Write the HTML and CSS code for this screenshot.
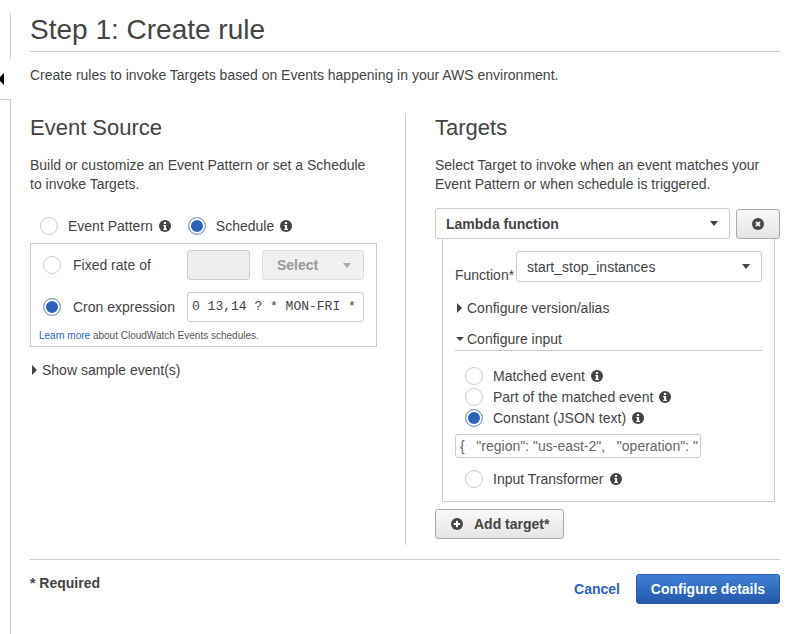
FILE: index.html
```html
<!DOCTYPE html>
<html lang="en">
<head>
    <meta charset="UTF-8">
    <title>Step 1: Create rule</title>
    <link rel="stylesheet" href="styles.css">
</head>
<body>
<svg class="icon-defs" width="0" height="0">
    <symbol id="info" viewBox="0 0 12 12">
        <circle cx="6" cy="6" r="6" fill="#444"/>
        <rect x="4.9" y="2" width="2.2" height="2" fill="#fff"/>
        <path d="M4.2 5h2.9v3.8h.9V10H4.2V8.8h.9V6.2h-.9z" fill="#fff"/>
    </symbol>
</svg>
<div class="page">
    <aside class="rail">
        <div class="rail-top"></div>
        <div class="rail-toggle"><span class="rail-arrow"></span></div>
        <div class="rail-bottom"></div>
    </aside>
    <main class="content">
        <h1 class="title">Step 1: Create rule</h1>
        <p class="intro">Create rules to invoke Targets based on Events happening in your AWS environment.</p>

        <div class="columns">
            <section class="col col-left">
                <h2>Event Source</h2>
                <p class="lead">Build or customize an Event Pattern or set a Schedule<br>to invoke Targets.</p>

                <div class="source-choice">
                    <span class="radio"></span>
                    <span class="choice-label">Event Pattern</span>
                    <svg class="info"><use href="#info"/></svg>
                    <span class="radio checked second"></span>
                    <span class="choice-label">Schedule</span>
                    <svg class="info"><use href="#info"/></svg>
                </div>

                <div class="schedule-box">
                    <div class="schedule-row">
                        <span class="radio"></span>
                        <span class="schedule-label">Fixed rate of</span>
                        <span class="rate-input"></span>
                        <span class="rate-select">Select<span class="caret-down light"></span></span>
                    </div>
                    <div class="schedule-row cron-row">
                        <span class="radio checked"></span>
                        <span class="schedule-label">Cron expression</span>
                        <span class="cron-input">0 13,14 ? * MON-FRI *</span>
                    </div>
                    <p class="schedule-help"><a href="#">Learn more</a> about CloudWatch Events schedules.</p>
                </div>

                <div class="expander sample"><span class="caret-right"></span>Show sample event(s)</div>
            </section>

            <section class="col col-right">
                <h2>Targets</h2>
                <p class="lead">Select Target to invoke when an event matches your<br>Event Pattern or when schedule is triggered.</p>

                <div class="target-head">
                    <div class="select target-select"><b>Lambda function</b><span class="caret-down"></span></div>
                    <button class="btn remove-btn" type="button">
                        <svg width="12" height="12" viewBox="0 0 12 12"><circle cx="6" cy="6" r="6" fill="#444"/><path d="M3.9 3.9l4.2 4.2M8.1 3.9L3.9 8.1" stroke="#fff" stroke-width="1.8"/></svg>
                    </button>
                </div>

                <div class="target-panel">
                    <div class="function-row">
                        <span class="function-label">Function*</span>
                        <div class="select function-select">start_stop_instances<span class="caret-down"></span></div>
                    </div>
                    <div class="expander version"><span class="caret-right"></span>Configure version/alias</div>
                    <div class="expander input-head"><span class="caret-open"></span>Configure input</div>

                    <div class="input-option first">
                        <span class="radio"></span><span>Matched event</span>
                        <svg class="info"><use href="#info"/></svg>
                    </div>
                    <div class="input-option">
                        <span class="radio"></span><span>Part of the matched event</span>
                        <svg class="info"><use href="#info"/></svg>
                    </div>
                    <div class="input-option">
                        <span class="radio checked"></span><span>Constant (JSON text)</span>
                        <svg class="info"><use href="#info"/></svg>
                    </div>
                    <div class="json-input">{ &nbsp; "region": "us-east-2", &nbsp; "operation": "</div>
                    <div class="input-option last">
                        <span class="radio"></span><span>Input Transformer</span>
                        <svg class="info"><use href="#info"/></svg>
                    </div>
                </div>

                <button class="btn add-btn" type="button">
                    <svg width="12" height="12" viewBox="0 0 12 12"><circle cx="6" cy="6" r="6" fill="#444"/><path d="M6 2.8v6.4M2.8 6h6.4" stroke="#fff" stroke-width="1.9"/></svg>
                    Add target*
                </button>
            </section>
        </div>

        <footer class="footer">
            <span class="required">* Required</span>
            <div class="actions">
                <a class="cancel" href="#">Cancel</a>
                <button class="btn-primary" type="button">Configure details</button>
            </div>
        </footer>
    </main>
</div>
</body>
</html>
```

FILE: styles.css
```css
html, body {
    margin: 0;
    padding: 0;
    height: 100%;
    overflow: hidden;
}

body {
    font-family: "Liberation Sans", Arial, sans-serif;
    font-size: 14px;
    color: #444;
    background-color: #fff;
}

.icon-defs {
    display: block;
    height: 0;
}

.page {
    display: flex;
    width: 803px;
    height: 634px;
}

/* left rail */
.rail {
    width: 11px;
    display: flex;
    flex-direction: column;
    flex-shrink: 0;
}

.rail-top {
    height: 46px;
    margin-top: 13px;
    border-right: 1px solid #ccc;
}

.rail-toggle {
    height: 40px;
    display: flex;
    align-items: center;
}

.rail-arrow {
    width: 0;
    height: 0;
    margin-left: -2px;
    border-top: 6px solid transparent;
    border-bottom: 6px solid transparent;
    border-right: 6px solid #000;
}

.rail-bottom {
    flex: 1;
    border-top: 1px solid #ccc;
    border-right: 1px solid #ccc;
}

/* main */
.content {
    width: 750px;
    margin-left: 19px;
}

.title {
    margin: 0;
    padding: 13px 0 0;
    height: 38px;
    font-size: 28px;
    line-height: 33px;
    font-weight: 400;
    border-bottom: 1px solid #ccc;
}

.intro {
    margin: 15px 0 0;
    line-height: 16px;
}

.columns {
    display: grid;
    grid-template-columns: 375px 375px;
    margin-top: 30px;
}

.col {
    min-height: 431px;
}

.col-left {
    padding-top: 1px;
}

.col-right {
    border-left: 1px solid #ccc;
    padding-top: 1px;
    padding-left: 29px;
    padding-right: 0;
}

h2 {
    margin: 0;
    font-size: 22px;
    line-height: 28px;
    font-weight: 400;
}

.lead {
    margin: 14px 0 0;
    line-height: 19px;
}

/* radios */
.radio {
    width: 18px;
    height: 18px;
    box-sizing: border-box;
    border: 1px solid #ccc;
    border-radius: 50%;
    background-color: #fff;
    flex-shrink: 0;
    display: inline-block;
}

.radio.checked {
    border-color: #8d9dc4;
    background-color: #2a62bd;
    box-shadow: inset 0 0 0 2px #fff;
}

.info {
    width: 12px;
    height: 12px;
    flex-shrink: 0;
}

/* event source */
.source-choice {
    display: flex;
    align-items: center;
    margin: 23px 0 0 10px;
    height: 18px;
}

.choice-label {
    margin: 0 6px 0 10px;
}

.radio.second {
    margin-left: 17px;
}

.schedule-box {
    width: 347px;
    height: 104px;
    box-sizing: border-box;
    margin-top: 8px;
    border: 1px solid #ccc;
    padding: 6px 12px 0;
}

.schedule-row {
    display: flex;
    align-items: center;
    height: 30px;
}

.cron-row {
    margin-top: 12px;
}

.schedule-label {
    width: 114px;
    margin-left: 12px;
}

.rate-input {
    width: 63px;
    height: 30px;
    box-sizing: border-box;
    border: 1px solid #ccc;
    border-radius: 3px;
    background-color: #eee;
}

.rate-select {
    width: 102px;
    height: 30px;
    box-sizing: border-box;
    margin-left: 12px;
    padding: 0 14px;
    display: flex;
    align-items: center;
    justify-content: space-between;
    border: 1px solid #ddd;
    border-radius: 3px;
    background-color: #f0f0f0;
    color: #999;
    font-weight: 700;
}

.cron-input {
    width: 177px;
    height: 30px;
    box-sizing: border-box;
    padding-left: 4px;
    border: 1px solid #ccc;
    border-radius: 3px;
    font-family: "Liberation Mono", monospace;
    font-size: 13px;
    line-height: 28px;
    white-space: nowrap;
    overflow: hidden;
}

.schedule-help {
    margin: 8px 0 0 -4px;
    font-size: 10px;
    line-height: 12px;
    color: #555;
}

.schedule-help a {
    color: #2a62bd;
    text-decoration: none;
}

/* carets */
.caret-down {
    width: 0;
    height: 0;
    margin-right: 1px;
    border-left: 4.5px solid transparent;
    border-right: 4.5px solid transparent;
    border-top: 5px solid #444;
}

.caret-down.light {
    border-top-color: #aaa;
    margin-right: -2px;
}

.caret-right {
    width: 0;
    height: 0;
    margin: 0 5px 0 2px;
    border-top: 5px solid transparent;
    border-bottom: 5px solid transparent;
    border-left: 5px solid #444;
}

.caret-open {
    width: 0;
    height: 0;
    margin: 0 3px 0 1px;
    border-left: 4px solid transparent;
    border-right: 4px solid transparent;
    border-top: 4px solid #444;
}

.expander {
    display: flex;
    align-items: center;
    line-height: 16px;
}

.sample {
    margin-top: 15px;
}

/* targets */
.target-head {
    display: flex;
    align-items: flex-start;
    justify-content: space-between;
    margin-top: 14px;
    width: 345px;
}

.select {
    height: 31px;
    box-sizing: border-box;
    padding: 0 10px;
    display: flex;
    align-items: center;
    justify-content: space-between;
    border: 1px solid #ccc;
    border-radius: 3px;
    background-color: #fff;
}

.target-select {
    width: 295px;
}

.btn {
    font-family: inherit;
    font-size: 14px;
    color: #444;
    border: 1px solid #aaa;
    border-radius: 3px;
    background: linear-gradient(#f9f9f9, #e4e4e4);
    padding: 0;
}

.remove-btn {
    width: 44px;
    height: 30px;
    margin-top: 1px;
    display: flex;
    align-items: center;
    justify-content: center;
}

.target-panel {
    width: 333px;
    height: 263px;
    box-sizing: border-box;
    margin-left: 7px;
    padding: 12px 12px 0;
    border: 1px solid #ccc;
    border-top: 0;
}

.function-row {
    display: flex;
    align-items: flex-start;
}

.function-label {
    margin-top: 16px;
    width: 61px;
    line-height: 16px;
}

.function-select {
    width: 246px;
}

.version {
    margin-top: 17px;
}

.input-head {
    margin-top: 15px;
    padding-bottom: 3px;
    border-bottom: 1px solid #ccc;
    width: 307px;
}

.input-option {
    display: flex;
    align-items: center;
    height: 18px;
    margin: 3px 0 0 10px;
}

.input-option .radio {
    margin-right: 10px;
}

.input-option .info {
    margin-left: 6px;
}

.input-option.first {
    margin-top: 16px;
}

.input-option.last {
    margin-top: 12px;
}

.json-input {
    width: 246px;
    height: 24px;
    box-sizing: border-box;
    margin-top: 7px;
    padding-left: 4px;
    border: 1px solid #ccc;
    border-radius: 3px;
    line-height: 22px;
    color: #666;
    white-space: nowrap;
    overflow: hidden;
}

.add-btn {
    width: 129px;
    height: 30px;
    margin-top: 7px;
    display: flex;
    align-items: center;
    padding-left: 15px;
    gap: 11px;
    font-weight: 700;
}

/* footer */
.footer {
    display: flex;
    justify-content: space-between;
    align-items: flex-start;
    margin-top: 14px;
    padding-top: 14px;
    border-top: 1px solid #ccc;
}

.required {
    font-weight: 700;
    line-height: 18px;
}

.actions {
    display: flex;
    align-items: center;
    gap: 16px;
}

.cancel {
    color: #2a62bd;
    font-weight: 700;
    text-decoration: none;
}

.btn-primary {
    width: 144px;
    height: 30px;
    font-family: inherit;
    font-size: 14px;
    font-weight: 700;
    color: #fff;
    border: 1px solid #2a5caa;
    border-radius: 3px;
    background: linear-gradient(#3f7fd6, #2459ad);
    padding: 0;
}
```
